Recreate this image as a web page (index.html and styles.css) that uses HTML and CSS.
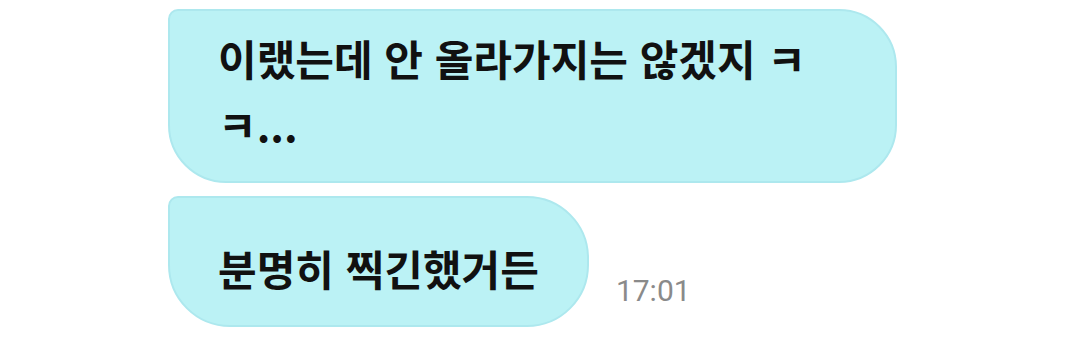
FILE: index.html
```html
<!DOCTYPE html>
<html lang="ko">
<head>
    <meta charset="UTF-8">
    <title>채팅</title>
    <link rel="stylesheet" href="styles.css">
</head>
<body>
    <div class="chat">
        <!-- 첫 번째 말풍선 -->
        <div class="row">
            <div class="bubble bubble-wide">이랬는데 안 올라가지는 않겠지 ㅋㅋ...</div>
        </div>
        <!-- 두 번째 말풍선 + 시간 -->
        <div class="row">
            <div class="bubble bubble-short">분명히 찍긴했거든</div>
            <span class="time">17:01</span>
        </div>
    </div>
</body>
</html>
```

FILE: styles.css
```css
/* 기본 */
body {
    margin: 0;
    background: #ffffff;
    font-family: "Noto Sans CJK KR", "Noto Sans", sans-serif;
}

.chat {
    display: flex;
    flex-direction: column;
    gap: 13px;
    padding: 9px 0 0 168px;
}

.row {
    display: flex;
    align-items: flex-end;
}

.bubble {
    box-sizing: border-box;
    background-color: #bbf2f5;
    border: 2px solid #ade8ee;
    border-radius: 10px 58px 58px 58px;
    color: #111;
    font-size: 42px;
    font-weight: 700;
    line-height: 66px;
}

.bubble-wide {
    width: 729px;
    height: 174px;
    padding: 14px 40px 0 48px;
}

.bubble-short {
    height: 131px;
    border-radius: 10px 62px 62px 62px;
    padding: 37px 48px 0 48px;
}

.time {
    margin: 0 0 19px 27px;
    font-family: Roboto, "Liberation Sans", sans-serif;
    font-size: 30px;
    color: #8a8a8a;
}
```
